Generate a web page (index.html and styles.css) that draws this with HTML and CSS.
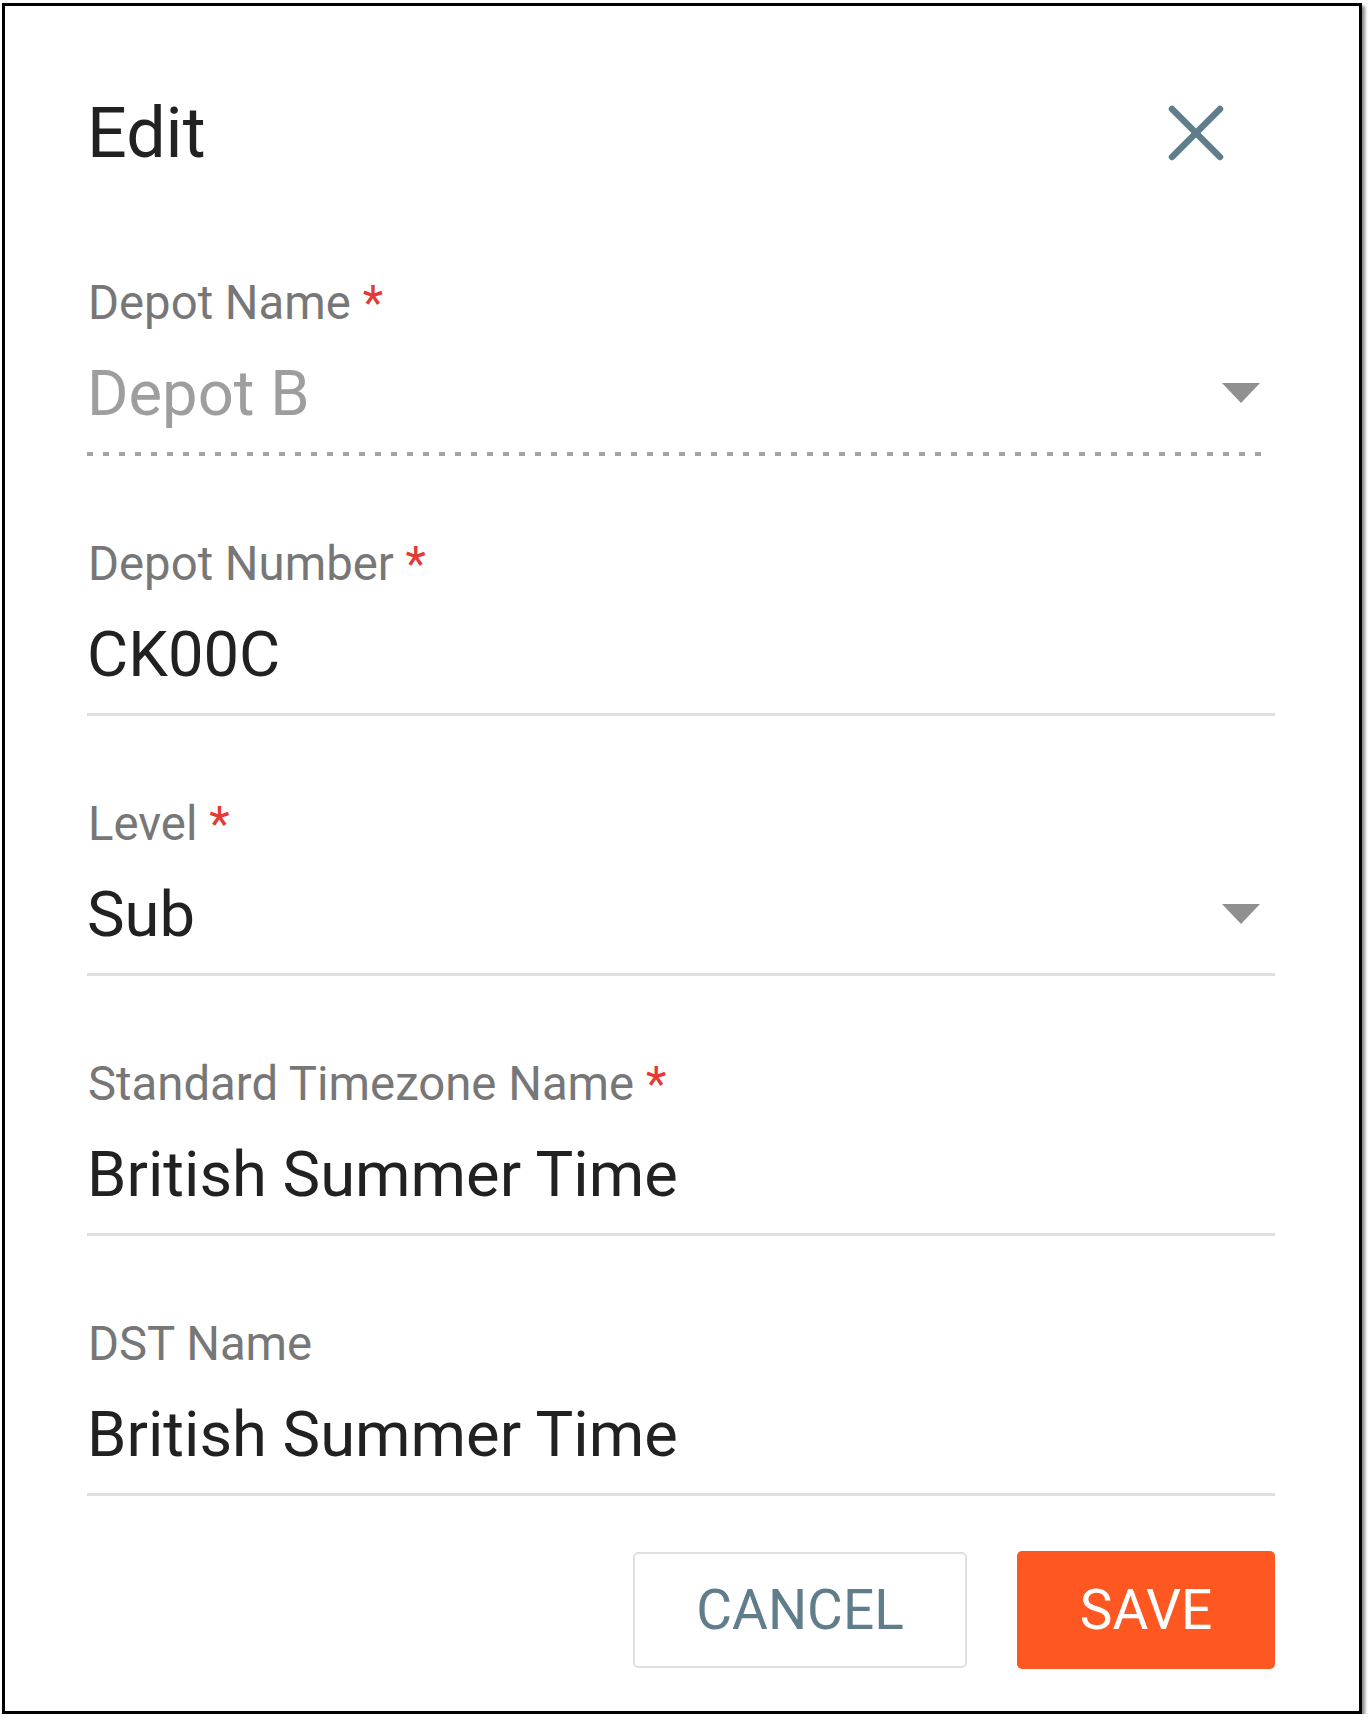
FILE: index.html
```html
<!DOCTYPE html>
<html lang="en">
<head>
  <meta charset="UTF-8" />
  <meta name="viewport" content="width=device-width, initial-scale=1.0" />
  <title>Edit</title>
  <link rel="stylesheet" href="styles.css">
</head>
<body>
  <div class="frame">
    <div class="dialog">
      <div class="header">
        <h1>Edit</h1>
        <button class="close" aria-label="Close">
          <svg width="56" height="56" viewBox="0 0 56 56">
            <line x1="4" y1="4" x2="52" y2="52" />
            <line x1="52" y1="4" x2="4" y2="52" />
          </svg>
        </button>
      </div>

      <div class="fields">
        <div class="field">
          <label>Depot Name <span class="req">*</span></label>
          <div class="value disabled">
            <span>Depot B</span>
            <span class="arrow"></span>
          </div>
          <div class="line dotted"></div>
        </div>

        <div class="field">
          <label>Depot Number <span class="req">*</span></label>
          <div class="value">
            <span>CK00C</span>
          </div>
          <div class="line"></div>
        </div>

        <div class="field">
          <label>Level <span class="req">*</span></label>
          <div class="value">
            <span>Sub</span>
            <span class="arrow"></span>
          </div>
          <div class="line"></div>
        </div>

        <div class="field">
          <label>Standard Timezone Name <span class="req">*</span></label>
          <div class="value">
            <span>British Summer Time</span>
          </div>
          <div class="line"></div>
        </div>

        <div class="field">
          <label>DST Name</label>
          <div class="value">
            <span>British Summer Time</span>
          </div>
          <div class="line"></div>
        </div>
      </div>

      <div class="actions">
        <button class="btn cancel">CANCEL</button>
        <button class="btn save">SAVE</button>
      </div>
    </div>
  </div>
</body>
</html>
```

FILE: styles.css
```css
body {
  margin: 0;
  background: #fff;
  font-family: Roboto, "Liberation Sans", Arial, sans-serif;
}
.frame {
  box-sizing: border-box;
  width: 1360px;
  height: 1711px;
  margin: 3px 0 0 2px;
  border: 3px solid #000;
  background: #fff;
  box-shadow: 3px 3px 3px rgba(0, 0, 0, 0.45);
}
.dialog {
  padding: 87px 84px 0 82px;
}
.header {
  display: flex;
  align-items: center;
  justify-content: space-between;
  margin-bottom: 102px;
}
h1 {
  margin: 0;
  font-size: 70px;
  line-height: 80px;
  font-weight: 400;
  color: #212121;
}
.close {
  border: none;
  background: none;
  padding: 0;
  margin-right: 51px;
  width: 56px;
  height: 56px;
  cursor: pointer;
}
.close svg {
  display: block;
}
.close line {
  stroke: #607d8b;
  stroke-width: 6.5;
  stroke-linecap: round;
}
.fields {
  display: flex;
  flex-direction: column;
  gap: 80px;
}
.field label {
  display: block;
  font-size: 47.3px;
  line-height: 56px;
  color: #777;
  padding-left: 1px;
}
.req {
  color: #e53935;
}
.value {
  display: flex;
  align-items: center;
  justify-content: space-between;
  margin-top: 26px;
  font-size: 63.3px;
  line-height: 72px;
  color: #212121;
}
.value.disabled {
  color: #9e9e9e;
}
.arrow {
  width: 0;
  height: 0;
  border-left: 19.5px solid transparent;
  border-right: 19.5px solid transparent;
  border-top: 20px solid #909090;
  margin-right: 15px;
}
.line {
  margin-top: 23px;
  height: 3px;
  background: #e0e0e0;
}
.line.dotted {
  width: 1182px;
  height: 4px;
  background: repeating-linear-gradient(to right, #a3a3a3 0 6px, transparent 6px 16px);
}
.actions {
  display: flex;
  justify-content: flex-end;
  align-items: center;
  gap: 50px;
  margin-top: 55px;
}
.btn {
  font-family: Roboto, "Liberation Sans", Arial, sans-serif;
  font-size: 55px;
  border-radius: 5px;
  cursor: pointer;
}
.cancel {
  width: 334px;
  height: 116px;
  background: #fff;
  border: 2px solid #e0e0e0;
  color: #607d8b;
}
.save {
  width: 258px;
  height: 118px;
  background: #ff5722;
  border: none;
  color: #fff;
}
```
